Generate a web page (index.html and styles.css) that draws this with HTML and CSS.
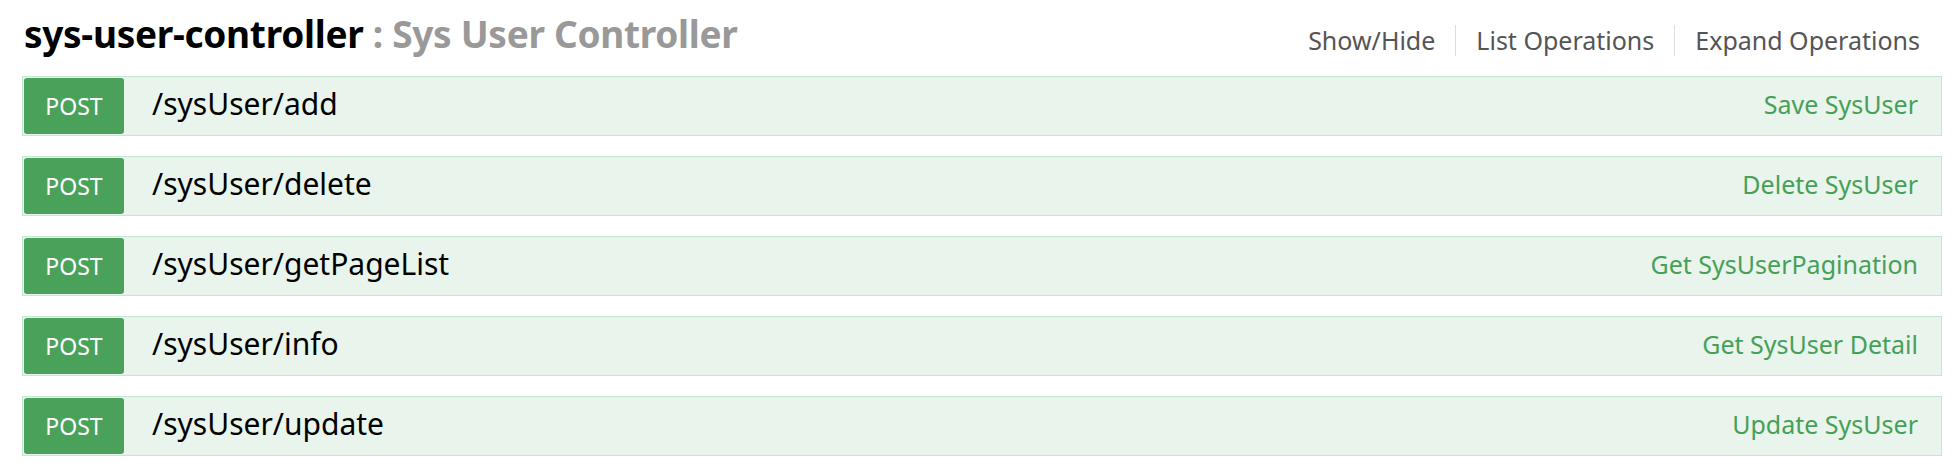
FILE: index.html
```html
<!DOCTYPE html>
<html>
<head>
<meta charset="utf-8">
<link rel="stylesheet" href="styles.css">
</head>
<body>
<div class="resource">
  <div class="heading">
    <h2 class="title"><span class="name">sys-user-controller</span> <span class="desc">: Sys User Controller</span></h2>
    <ul class="options">
      <li>Show/Hide</li>
      <li>List Operations</li>
      <li>Expand Operations</li>
    </ul>
  </div>
  <ul class="endpoints">
    <li class="op"><span class="method">POST</span><span class="path">/sysUser/add</span><span class="summary">Save SysUser</span></li>
    <li class="op"><span class="method">POST</span><span class="path">/sysUser/delete</span><span class="summary">Delete SysUser</span></li>
    <li class="op"><span class="method">POST</span><span class="path">/sysUser/getPageList</span><span class="summary">Get SysUserPagination</span></li>
    <li class="op"><span class="method">POST</span><span class="path">/sysUser/info</span><span class="summary">Get SysUser Detail</span></li>
    <li class="op"><span class="method">POST</span><span class="path">/sysUser/update</span><span class="summary">Update SysUser</span></li>
  </ul>
</div>
</body>
</html>
```

FILE: styles.css
```css
html, body {
  margin: 0;
  padding: 0;
  background: #ffffff;
}
body {
  font-family: "Noto Sans", "Open Sans", sans-serif;
}
.resource {
  padding: 0 16px 0 22px;
}
.heading {
  display: flex;
  justify-content: space-between;
  align-items: flex-start;
  height: 76px;
}
.title {
  margin: 0;
  padding: 10px 0 0 2px;
  font-size: 37px;
  font-weight: 700;
  line-height: 48px;
  letter-spacing: -0.3px;
  white-space: nowrap;
}
.title .name {
  color: #000000;
}
.title .desc {
  color: #999999;
}
.options {
  list-style: none;
  margin: 0;
  padding: 25px 22px 0 0;
  display: flex;
}
.options li {
  font-size: 25px;
  line-height: 31px;
  color: #555555;
  padding: 0 20px;
  border-left: 1px solid #dddddd;
  white-space: nowrap;
}
.options li:first-child {
  border-left: none;
}
.options li:last-child {
  padding-right: 0;
}
.endpoints {
  list-style: none;
  margin: 0;
  padding: 0;
  display: flex;
  flex-direction: column;
  gap: 20px;
}
.op {
  display: flex;
  align-items: center;
  height: 56px;
  padding: 1px;
  border: 1px solid #c5e6d0;
  background: #e8f4ec;
}
.method {
  width: 100px;
  height: 56px;
  display: flex;
  align-items: center;
  justify-content: center;
  background: #4aa25a;
  color: #ffffff;
  border-radius: 3px;
  font-size: 23px;
}
.path {
  margin-left: 28px;
  padding-bottom: 5px;
  font-size: 30px;
  color: #000000;
  flex: 1;
}
.summary {
  font-size: 25px;
  padding-bottom: 5px;
  color: #47a058;
  padding-right: 22px;
}
```
